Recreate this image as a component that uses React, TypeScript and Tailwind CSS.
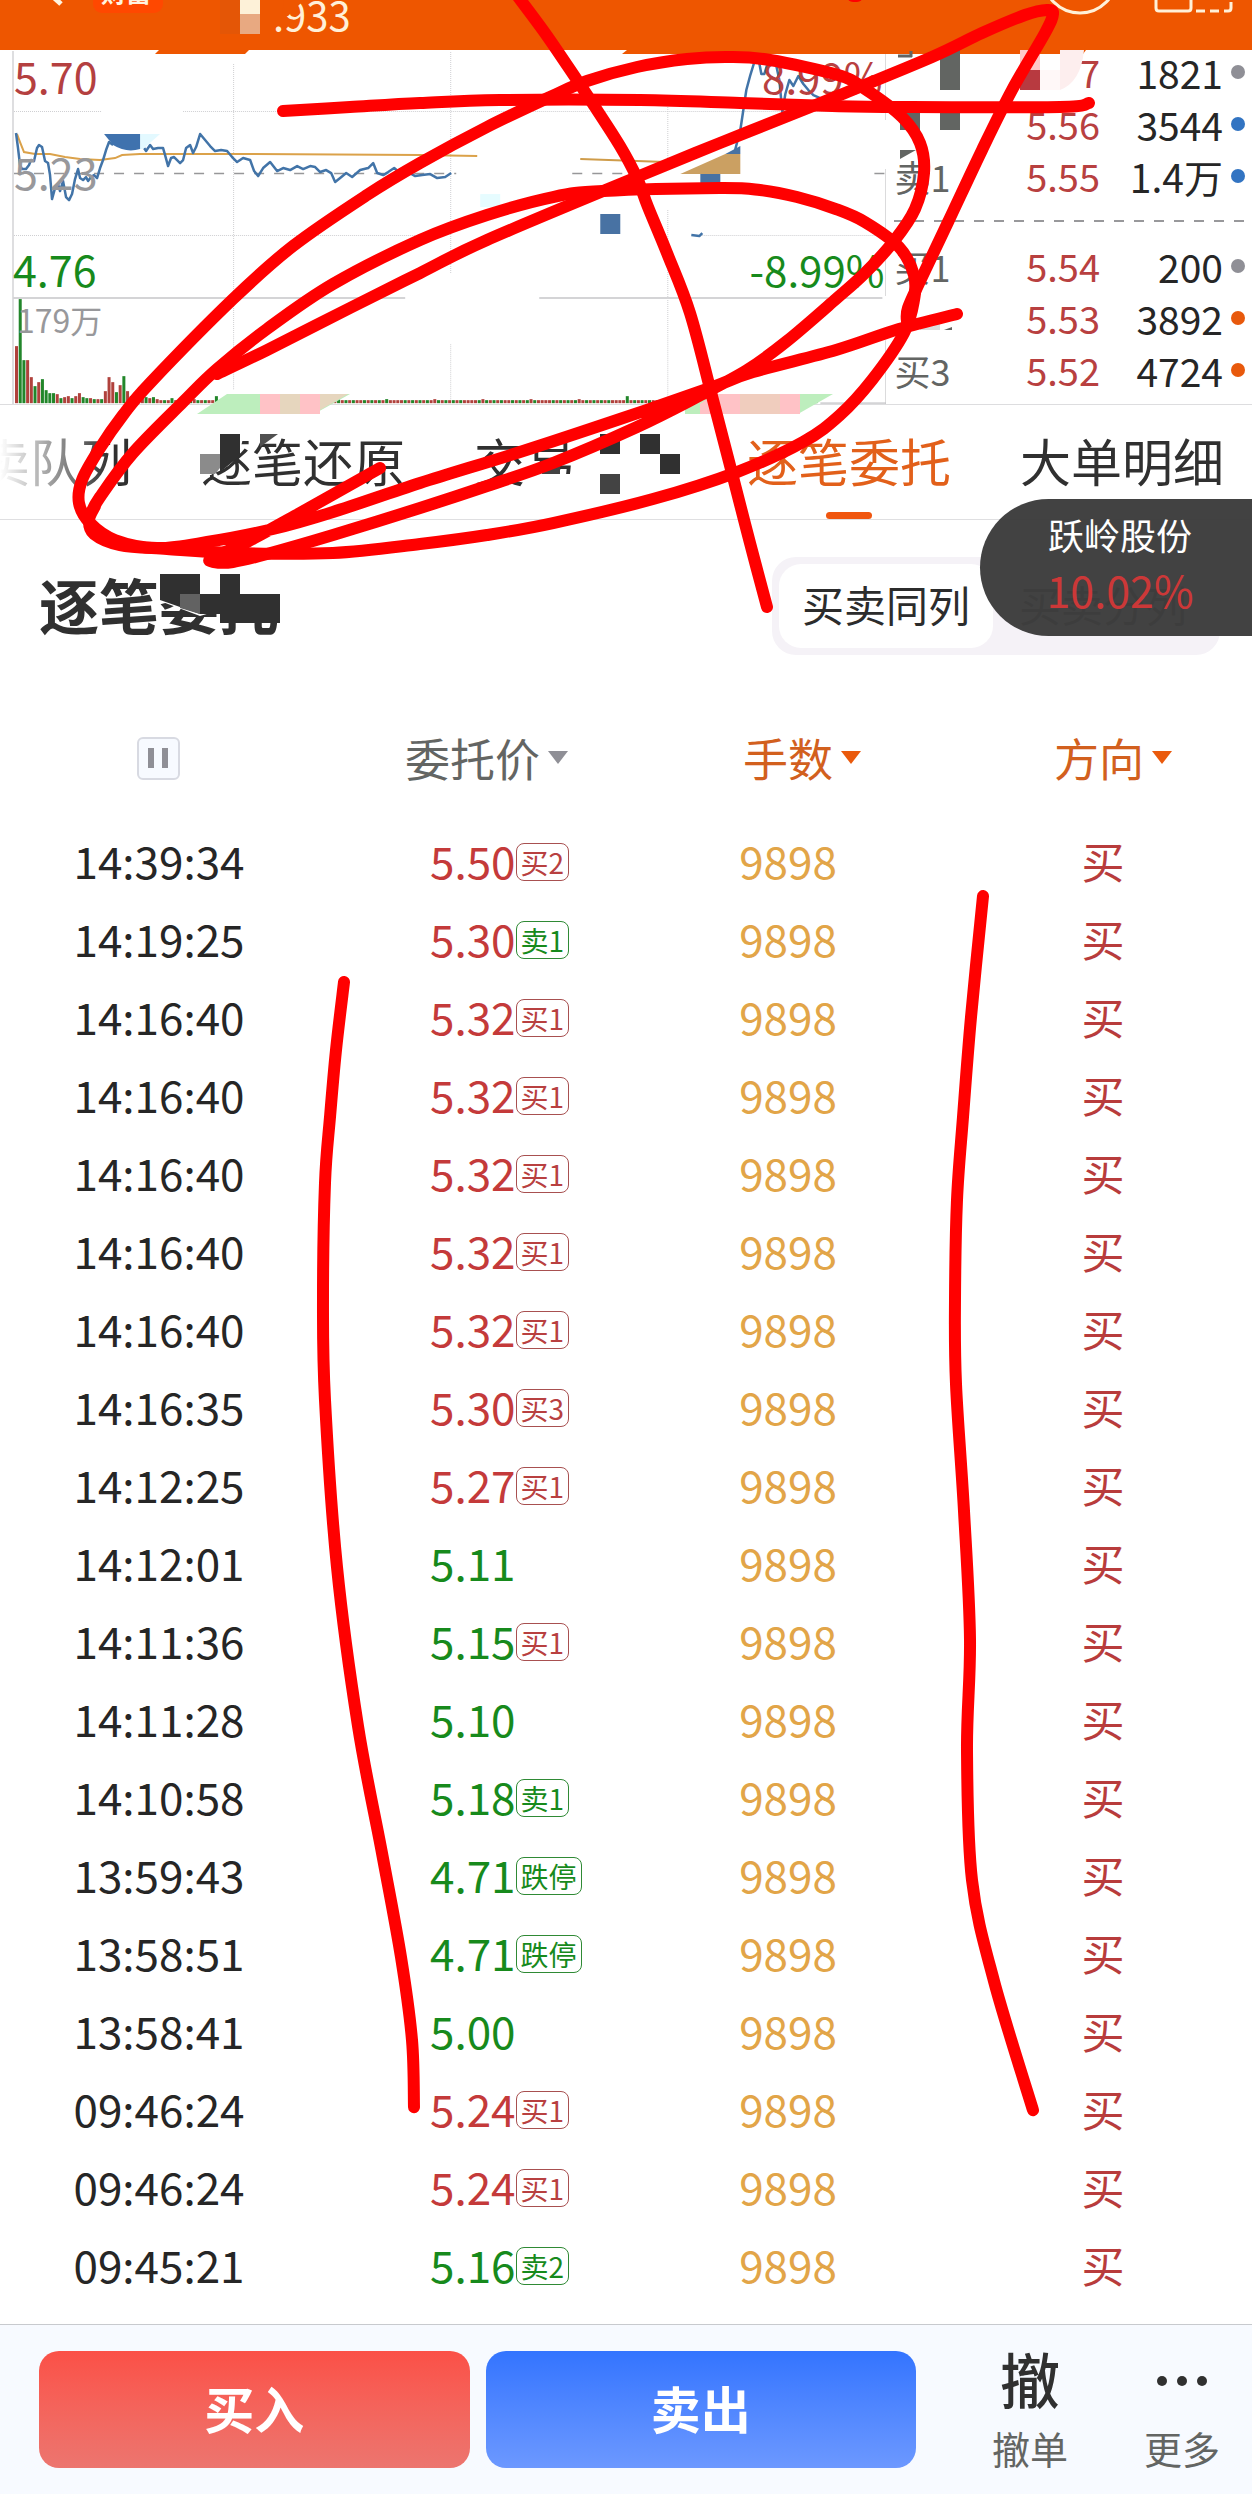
import React from "react";

type Tone = "red" | "green";
type Order = { time: string; price: string; tone: Tone; tag?: string; tagTone?: Tone };

const ORDERS: Order[] = [
  { time: "14:39:34", price: "5.50", tone: "red", tag: "买2", tagTone: "red" },
  { time: "14:19:25", price: "5.30", tone: "red", tag: "卖1", tagTone: "green" },
  { time: "14:16:40", price: "5.32", tone: "red", tag: "买1", tagTone: "red" },
  { time: "14:16:40", price: "5.32", tone: "red", tag: "买1", tagTone: "red" },
  { time: "14:16:40", price: "5.32", tone: "red", tag: "买1", tagTone: "red" },
  { time: "14:16:40", price: "5.32", tone: "red", tag: "买1", tagTone: "red" },
  { time: "14:16:40", price: "5.32", tone: "red", tag: "买1", tagTone: "red" },
  { time: "14:16:35", price: "5.30", tone: "red", tag: "买3", tagTone: "red" },
  { time: "14:12:25", price: "5.27", tone: "red", tag: "买1", tagTone: "red" },
  { time: "14:12:01", price: "5.11", tone: "green" },
  { time: "14:11:36", price: "5.15", tone: "green", tag: "买1", tagTone: "red" },
  { time: "14:11:28", price: "5.10", tone: "green" },
  { time: "14:10:58", price: "5.18", tone: "green", tag: "卖1", tagTone: "green" },
  { time: "13:59:43", price: "4.71", tone: "green", tag: "跌停", tagTone: "green" },
  { time: "13:58:51", price: "4.71", tone: "green", tag: "跌停", tagTone: "green" },
  { time: "13:58:41", price: "5.00", tone: "green" },
  { time: "09:46:24", price: "5.24", tone: "red", tag: "买1", tagTone: "red" },
  { time: "09:46:24", price: "5.24", tone: "red", tag: "买1", tagTone: "red" },
  { time: "09:45:21", price: "5.16", tone: "green", tag: "卖2", tagTone: "green" },
];

const TEXT_TONE: Record<Tone, string> = { red: "text-[#c43a3a]", green: "text-[#178a1c]" };
const TAG_TONE: Record<Tone, string> = {
  red: "border-[#a85050] text-[#b84040]",
  green: "border-[#2f8a35] text-[#178a1c]",
};

type Pt = [number, number];

function smooth(p: Pt[]): string {
  let d = `M${p[0][0]} ${p[0][1]}`;
  for (let i = 0; i < p.length - 1; i++) {
    const a = p[Math.max(i - 1, 0)];
    const b = p[i];
    const c = p[i + 1];
    const e = p[Math.min(i + 2, p.length - 1)];
    d += `C${b[0] + (c[0] - a[0]) / 6} ${b[1] + (c[1] - a[1]) / 6} ${c[0] - (e[0] - b[0]) / 6} ${c[1] - (e[1] - b[1]) / 6} ${c[0]} ${c[1]}`;
  }
  return d;
}

const STROKES: Pt[][] = [
  [[283, 111], [350, 107], [420, 103], [500, 100], [640, 100], [740, 103], [832, 106], [900, 107], [1060, 107], [1089, 103]],
  [[516, -6], [545, 33], [577, 80], [593, 104], [620, 146], [637, 178], [648, 207], [667, 253], [690, 313], [712, 396], [733, 477], [750, 543], [767, 607]],
  [[217, 374], [267, 350], [350, 308], [420, 273], [487, 240], [637, 177], [720, 143], [803, 110], [840, 95], [932, 57], [982, 33], [1025, 15], [1047, 10], [1053, 14], [1045, 33], [1012, 90], [982, 150], [949, 220], [922, 277], [908, 308], [907, 322]],
  [[380, 468], [300, 513], [247, 542], [212, 558], [214, 562], [233, 562], [267, 554], [333, 535], [420, 508], [487, 486], [553, 463], [637, 427], [697, 397], [747, 370], [787, 341], [836, 299], [865, 273], [894, 241], [915, 209], [924, 173], [920, 143], [902, 117], [865, 89], [838, 75], [770, 60], [730, 57], [687, 59], [637, 67], [587, 81], [550, 97], [487, 127], [420, 163], [367, 195], [293, 246], [233, 299], [150, 383], [123, 415], [100, 448], [82, 480], [79, 503], [90, 523], [115, 540], [157, 548], [207, 542], [273, 529], [333, 512], [420, 483], [520, 452], [620, 419], [710, 388], [753, 372], [836, 350], [899, 329], [957, 314]],
  [[95, 506], [89, 520], [94, 534], [120, 545], [167, 549], [233, 553], [333, 553], [420, 544], [487, 535], [553, 523], [653, 499], [737, 472], [803, 442], [840, 415], [872, 380], [904, 333], [914, 300], [914, 275], [899, 247], [865, 222], [836, 209], [797, 197], [760, 190], [720, 188], [603, 191], [553, 197], [487, 215], [420, 240], [333, 284], [267, 329], [217, 369], [183, 402], [133, 453], [100, 497], [90, 515]],
  [[344, 982], [336, 1050], [330, 1117], [325, 1183], [323, 1300], [325, 1400], [337, 1567], [358, 1726], [382, 1853], [401, 1957], [412, 2040], [414, 2107]],
  [[983, 896], [971, 1017], [963, 1117], [957, 1200], [955, 1300], [956, 1384], [964, 1511], [970, 1639], [967, 1750], [972, 1880], [994, 1981], [1033, 2110]],
];

function Annotations() {
  return (
    <svg className="pointer-events-none absolute inset-0 h-full w-full" viewBox="0 0 1252 2494" preserveAspectRatio="none" aria-hidden="true">
      <g fill="none" stroke="#ff0000" strokeWidth="12" strokeLinecap="round" strokeLinejoin="round">
        {STROKES.map((s, i) => (
          <path key={i} d={smooth(s)} />
        ))}
        <path d="M853 -4h4" />
      </g>
    </svg>
  );
}

function Header() {
  return (
    <header className="h-[50px] bg-[#ee5600]">
      <svg className="relative block h-[54px] w-full" viewBox="0 0 1252 54" preserveAspectRatio="xMinYMin slice" role="img" aria-label=".933">
        <path d="M0 0H1252V50H0ZM155 54l4-4h90l-4 4ZM622 54l5-4h459l-3 4Z" fill="#ee5600" />
        <path d="M50 -6l11 10" stroke="#fff4e0" strokeWidth="5" fill="none" />
        <rect x="93" y="-14" width="70" height="27" rx="9" fill="#ff4800" />
        <text x="101" y="2" fontSize="25" fontWeight="700" fill="#fff4e0">财富</text>
        <path d="M240 0h20v14h-20Z" fill="#fdf1d8" />
        <path d="M240 14h20v20h-20Z" fill="#e8a981" />
        <path d="M220 0h20v34h-20Z" fill="#e45606" />
        <text x="273" y="31" fontSize="40" fill="#fff0d8">.933</text>
        <path d="M284 0h20l-16 16h-6Z" fill="#ee5600" />
        <g fill="none" stroke="#fff0d8" strokeWidth="3">
          <circle cx="1080" cy="-24" r="37" />
          <path d="M1156 -4v12q0 3 3 3h29q3 0 3-3v-12" />
          <path d="M1196 11h9M1210 11h9M1224 11h4q3 0 3-3v-6" />
        </g>
      </svg>
    </header>
  );
}

const PRICE_LINE =
  "16,133 18,148 20,165 22,169 26,169 29,165 31,160 34,161 37,148 39,145 42,147 45,161 48,163 50,175 52,199 55,188 58,184 60,191 63,181 66,197 69,200 72,194 75,179 78,169 80,178 83,180 86,177 88,181 91,177 94,175 97,178 100,168 103,160 106,150 109,142 113,145";
const PRICE_LINE_2 =
  "144,148 146,151 150,145 153,149 158,148 163,148 165,155 168,166 171,158 174,157 180,163 183,160 186,148 190,145 193,153 196,147 200,134 205,140 210,146 215,151 221,150 227,151 232,157 237,162 243,158 250,160 254,171 258,176 263,168 270,162 277,171 283,168 290,170 297,166 303,169 310,166 315,167 320,172 326,170 331,173 335,182 340,178 346,173 352,177 360,170 368,168 373,163 377,173 383,175 388,172 394,168 401,174 408,172 415,176 422,175 430,174 437,178 445,177 451,173";
const PRICE_LINE_3 =
  "734,153 740,130 743,110 746,90 750,75 754,62 758,58 761,74 764,74 767,64 771,60 776,66 779,80 782,112 785,94 789,80 793,86 798,76 803,84 808,90 813,95 822,99";

const BARS: string =
  "57r 104g 43g 43r 26r 17g 21r 24g 13g 10g 10g 9r 5g 6r 7r 5g 7r 10r 6g 5g 5r 4g 4r 4g 12r 26r 21r 11g 18r 27g 12r 7r 8r 5g 9r 6g 5r 6g 4r 3r 3g 3r 5g";

function Chart() {
  const head = BARS.split(" ").map((b) => ({ h: parseInt(b, 10), red: b.endsWith("r") }));
  const tail = Array.from({ length: 174 }, (_, i) => ({
    h: i === 11 || i === 122 ? 7 : i % 13 === 5 ? 4 : 3,
    red: (i * 7 + (i >> 2)) % 5 < 3,
  }));
  return (
    <svg className="block h-auto w-full" viewBox="0 50 886 354" role="img" aria-label="分时图">
      <g stroke="#cfcfd2" strokeWidth="1" strokeDasharray="1 1" fill="none">
        <path d="M14 111.500H102M183 111.500H885M14 235.500H420M700 235.500H885" />
        <path d="M233.500 64V390M450.500 52V273M450.500 344V400M667.500 105V170M667.500 210V400" />
      </g>
      <path d="M13 51V404" stroke="#dedee0" strokeWidth="2" />
      <path d="M13 298H405M539 298H882M820 403H886" stroke="#d4d4d6" strokeWidth="2" />
      <path d="M885.500 51V120M885.500 169V296M885.500 340V404" stroke="#c4c4c6" strokeWidth="1" />
      <path d="M14 173.500H456M572 173.500H640M874 173.500H884" stroke="#979799" strokeWidth="1.500" strokeDasharray="10 10" />
      <polyline points="17,134 20,142 24,152 35,154 50,154 65,157 80,159 100,160 115,158 122,155 140,154 250,154 420,155 477,156" fill="none" stroke="#dba24a" strokeWidth="2" />
      <path d="M580 159L665 162" stroke="#cf9c4a" strokeWidth="2" />
      <g fill="none" stroke="#4274a8" strokeWidth="2.500" strokeLinejoin="round">
        <polyline points={PRICE_LINE} />
        <polyline points={PRICE_LINE_2} />
        <polyline points={PRICE_LINE_3} />
        <path d="M691 235l8 1 3-3" />
      </g>
      <path d="M140 134h20l-17 15h-3Z" fill="#e3f9ff" />
      <path d="M104 134h36v15q-14 4-27-4Z" fill="#3f72ae" />
      <path d="M480 194h20v13h-20Z" fill="#e6fcff" />
      <path d="M600 214h20v20h-20ZM700 174h20v20h-20ZM725 154l15-8v8Z" fill="#4872a3" />
      <path d="M680 174l45-20h15v20Z" fill="#cba062" />
      {head.concat(tail).map((b, i) => (
        <rect key={i} x={15 + i * 3.7} y={403 - b.h} width="3" height={b.h} fill={b.red ? "#b0413c" : "#22862a"} />
      ))}
      <g fontSize="43">
        <text x="14" y="94" fill="#b44040">5.70</text>
        <text x="14" y="190" fill="#98989b">5.23</text>
        <text x="13" y="287" fill="#178a1c">4.76</text>
      </g>
      <g fontSize="42" textAnchor="end">
        <text x="882" y="94" fill="#b84040">8.99%</text>
        <text x="884" y="287" fill="#178a1c">-8.99%</text>
      </g>
      <text x="17" y="333" fontSize="32" fill="#98989b">179万</text>
    </svg>
  );
}

type Level = { label: string; price: string; qty: string; dot: string; hidden?: boolean };
const ASKS: Level[] = [
  { label: "卖3", price: "7", qty: "1821", dot: "bg-[#8f8f96]", hidden: true },
  { label: "卖2", price: "5.56", qty: "3544", dot: "bg-[#3274c2]", hidden: true },
  { label: "卖1", price: "5.55", qty: "1.4万", dot: "bg-[#3274c2]" },
];
const BIDS: Level[] = [
  { label: "买1", price: "5.54", qty: "200", dot: "bg-[#8f8f96]" },
  { label: "买2", price: "5.53", qty: "3892", dot: "bg-[#e8590c]", hidden: true },
  { label: "买3", price: "5.52", qty: "4724", dot: "bg-[#e8590c]" },
];

function LevelRow({ level }: { level: Level }) {
  return (
    <li className="flex h-[52px] items-center pr-[7px] pl-2 text-[38px] leading-[52px]">
      <span className="w-[72px] text-[36px] text-[#636563]">{level.hidden ? "" : level.label}</span>
      <span className="flex-1 text-right text-[#b84040]">{level.price}</span>
      <span className="w-[123px] text-right text-[39px] text-[#262626]">{level.qty}</span>
      <span className={`ml-2 h-[14px] w-[14px] rounded-full ${level.dot}`} />
    </li>
  );
}

function OrderBook() {
  return (
    <div className="relative h-full">
      <div className="-mt-1">
        <ul>
          {ASKS.map((l) => (
            <LevelRow key={l.label} level={l} />
          ))}
        </ul>
        <svg className="my-[18px] block h-[2px] w-full" aria-hidden="true">
          <path d="M8 1H364" stroke="#98989b" strokeWidth="2" strokeDasharray="10 10" />
        </svg>
        <ul>
          {BIDS.map((l) => (
            <LevelRow key={l.label} level={l} />
          ))}
        </ul>
      </div>
      <svg className="absolute top-0 left-0" width="200" height="300" viewBox="886 50 200 300" aria-hidden="true">
        <path d="M940 54h20v40h-20ZM900 114h20v20h-20ZM940 114h20v20h-20ZM900 154h16l-16 9Z" fill="#626562" />
        <path d="M898 60h14M911 55v6" stroke="#636563" strokeWidth="3" />
        <path d="M1020 54h20v20h-20Z" fill="#ffc9c9" />
        <path d="M1020 74h20v20h-20Z" fill="#b83a40" />
        <path d="M1040 74h20v20h-20Z" fill="#fff8f8" />
        <path d="M1060 54h24q-3 32-24 40Z" fill="#fdeeee" />
        <path d="M920 324h20v10h-20Z" fill="#ddd" />
        <path d="M944 334l8-3v3Z" fill="#636563" />
      </svg>
    </div>
  );
}

function Quote() {
  return (
    <section className="flex border-b border-[#dddddf]">
      <div className="w-[70.8%] shrink-0">
        <Chart />
      </div>
      <div className="min-w-0 flex-1">
        <OrderBook />
      </div>
    </section>
  );
}

function Tabs() {
  const base = "h-full w-[204px] shrink-0 pb-1 text-left text-[51px] whitespace-nowrap text-[#303030]";
  return (
    <nav className="relative -ml-[72px] flex h-[115px] items-stretch gap-[69px] border-b border-[#dfdfe1]">
      <button className={base}>买卖队列</button>
      <button className={base}>逐笔还原</button>
      <button className={base} aria-label="交易明细">交易</button>
      <button className="relative h-full w-[204px] shrink-0 pb-1 text-left text-[51px] whitespace-nowrap text-[#e2601a]" aria-current="page">
        逐笔委托
        <span className="absolute bottom-0 left-1/2 h-[7px] w-[46px] -translate-x-1/2 rounded-full bg-[#f0560f]" />
      </button>
      <button className={base}>大单明细</button>
      <span className="absolute inset-y-4 left-[72px] w-[110px] bg-linear-to-r from-white to-white/0" />
      <svg className="absolute top-0 left-[72px] overflow-visible" width="700" height="115" viewBox="0 405 700 115" aria-hidden="true">
        <path d="M200 434h44l-5 21-28 20h-11Z" fill="#fff" />
        <path d="M200 454h20v14l-5 6h-15Z" fill="#8b8b8b" />
        <path d="M220 434h20v22l-20 16Z" fill="#303030" />
        <path d="M260 434h18l-18 13Z" fill="#505050" />
        <path d="M530 474h60v20h-60Z" fill="#fff" />
        <path d="M600 434h20v20h-20ZM640 434h20v20h-20ZM660 454h20v20h-20Z" fill="#303030" />
        <path d="M600 474h20v20h-20ZM543 468l17-7v13h-17Z" fill="#434343" />
        <path d="M197 414l30-20h123l-36 20Z" fill="#bdeebd" />
        <path d="M260 394h20v20h-20ZM300 394h20v20h-20Z" fill="#ffc2c6" />
        <path d="M280 394h20v20h-20ZM320 394h28l-28 16Z" fill="#e6d6be" />
        <path d="M685 414v-10l20-10h128l-35 20Z" fill="#bdeebd" />
        <path d="M700 404l14-10h26v20h-40ZM780 394h20v20h-20Z" fill="#ffc2c6" />
        <path d="M740 394h40v20h-40Z" fill="#f0cdbe" />
      </svg>
    </nav>
  );
}

function TitleBar() {
  return (
    <section className="relative flex h-[171px] items-center justify-between pr-8 pl-[39px]">
      <h1 className="pb-1 text-[60px] leading-none font-bold text-[#303030]">逐笔委托</h1>
      <svg className="absolute top-[54px] left-[160px]" width="120" height="56" viewBox="160 574 120 56" aria-hidden="true">
        <path d="M160 574h120v20h-40v-20h-20v36l-20 6-40-15Z" fill="#fff" />
        <path d="M160 574h40v20h20v-20h20v20h40v29h-60v-9h-20l-40-14Z" fill="#303030" />
        <path d="M180 594h20v20l-20-6Z" fill="#626262" />
      </svg>
      <div className="flex w-[448px] rounded-[24px] bg-[#f5f2f7] p-[7px] text-[42px] leading-[80px]">
        <button className="h-[84px] w-[214px] rounded-[22px] bg-white pb-1 text-[#2c2c2c]">买卖同列</button>
        <button className="h-[84px] flex-1 pb-1 text-[#636563]">买卖分列</button>
      </div>
      <aside className="absolute -top-[21px] right-0 flex h-[137px] w-[272px] flex-col items-center justify-center rounded-l-full bg-[#3c3c3c]/97 pb-3 pl-2">
        <span className="text-[36px] leading-[54px] text-white">跃岭股份</span>
        <span className="text-[43px] leading-[56px] text-[#cc3838]">10.02%</span>
      </aside>
    </section>
  );
}

function SortHead({ label, active }: { label: string; active?: boolean }) {
  return (
    <button className={`inline-flex items-center gap-2 align-middle font-normal ${active ? "text-[#d2601e]" : "text-[#636563]"}`}>
      {label}
      <svg width="20" height="13" viewBox="0 0 20 13" aria-hidden="true">
        <path d="M0 0h20L10 13Z" fill={active ? "#ea5a0c" : "#8f8f96"} />
      </svg>
    </button>
  );
}

function Orders() {
  return (
    <table className="mb-[21px] w-full table-fixed border-collapse">
      <colgroup>
        <col className="w-[320px]" />
        <col />
        <col className="w-[316px]" />
        <col className="w-[306px]" />
      </colgroup>
      <thead>
        <tr className="h-[130px] text-[45px] leading-none">
          <th className="pr-1 pb-1 text-center">
            <button aria-label="暂停" className="inline-flex h-[43px] w-[43px] items-center justify-center gap-2 rounded-md border-2 border-[#d8dae2] bg-[#f7faff] align-middle">
              <span className="h-5 w-[6px] bg-[#8f8f96]" />
              <span className="h-5 w-[6px] bg-[#8f8f96]" />
            </button>
          </th>
          <th className="pb-1 pl-[85px] text-left"><SortHead label="委托价" /></th>
          <th className="pb-1 pl-7 text-center"><SortHead label="手数" active /></th>
          <th className="pb-1 pl-7 text-center"><SortHead label="方向" active /></th>
        </tr>
      </thead>
      <tbody>
        {ORDERS.map((o, i) => (
          <tr key={i} className="h-[78px] text-[44px] leading-none">
            <td className="pr-[2px] text-center text-[#262626]">{o.time}</td>
            <td className={`pl-[110px] whitespace-nowrap ${TEXT_TONE[o.tone]}`}>
              <div className="flex items-center">
                {o.price}
                {o.tag && o.tagTone && (
                  <span className={`mt-1 flex h-[38px] items-center rounded-lg border px-1 text-[28px] ${TAG_TONE[o.tagTone]}`}>{o.tag}</span>
                )}
              </div>
            </td>
            <td className="text-center text-[#e2a548]">9898</td>
            <td className="pl-2 text-center text-[43px] text-[#b83c3c]">买</td>
          </tr>
        ))}
      </tbody>
    </table>
  );
}

function TradeBar() {
  return (
    <footer className="flex h-[170px] items-start border-t border-[#c8cace] bg-[#f7faff] pt-[26px] pr-[22px] pl-[39px]">
      <button className="h-[117px] flex-1 rounded-[20px] bg-linear-to-b from-[#fb5047] to-[#ec756f] pb-1 text-[50px] font-bold text-white">买入</button>
      <button className="ml-4 h-[117px] flex-1 rounded-[20px] bg-linear-to-b from-[#3374ff] to-[#6c98ff] pb-1 text-[50px] font-bold text-white">卖出</button>
      <button className="ml-[38px] flex w-[152px] flex-col items-center text-[#303030]">
        <span className="text-[60px] leading-[54px] font-medium">撤</span>
        <span className="mt-4 text-[38px] leading-[54px] text-[#636563]">撤单</span>
      </button>
      <button className="flex w-[124px] flex-col items-center pl-7 text-[#303030]">
        <svg className="h-[54px] w-[50px]" viewBox="0 0 50 54" aria-hidden="true">
          <circle cx="5" cy="30" r="5" fill="#303030" />
          <circle cx="25" cy="30" r="5" fill="#303030" />
          <circle cx="45" cy="30" r="5" fill="#303030" />
        </svg>
        <span className="mt-4 text-[38px] leading-[54px] whitespace-nowrap text-[#636563]">更多</span>
      </button>
    </footer>
  );
}

export default function App() {
  return (
    <div className="relative overflow-hidden bg-white font-['Noto_Sans_CJK_SC',sans-serif]">
      <Header />
      <Quote />
      <Tabs />
      <TitleBar />
      <Orders />
      <TradeBar />
      <Annotations />
    </div>
  );
}
